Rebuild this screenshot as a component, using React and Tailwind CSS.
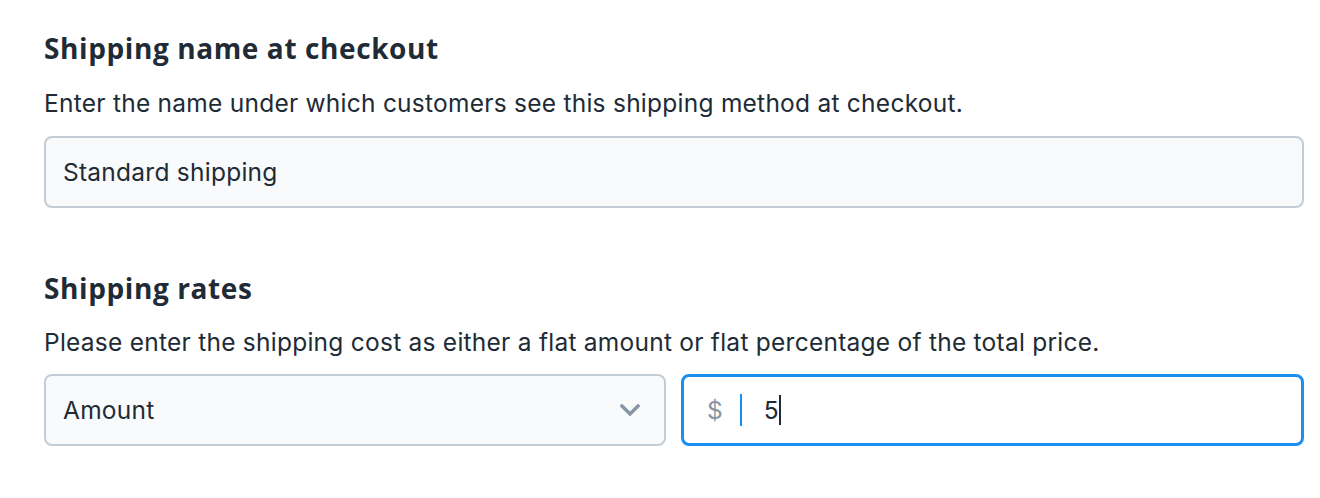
import React from 'react'

function ChevronDown() {
  return (
    <svg width="20" height="12" viewBox="0 0 20 12" fill="none">
      <path d="M2 2l8 8 8-8" stroke="#8795a4" strokeWidth="3.4" strokeLinecap="square" />
    </svg>
  )
}

export default function App() {
  return (
    <div className="w-[1320px] h-[498px] bg-white pl-[44px] pr-[16px] pt-[30px] font-['Inter',sans-serif] text-[#212b36]">
      {/* Shipping name */}
      <section>
        <h2 className="text-[28px] leading-[36px] font-bold font-['Open_Sans',sans-serif] tracking-[0.6px]">Shipping name at checkout</h2>
        <p className="mt-[21px] text-[24.5px] leading-[32px] tracking-[0.25px]">
          Enter the name under which customers see this shipping method at checkout.
        </p>
        <div className="mt-[17px] h-[72px] flex items-center px-[17px] rounded-[8px] border-2 border-[#c4cdd5] bg-[#f9fafb] text-[24.5px] tracking-[0.25px]">
          Standard shipping
        </div>
      </section>

      {/* Shipping rates */}
      <section className="mt-[62px]">
        <h2 className="text-[28px] leading-[36px] font-bold font-['Open_Sans',sans-serif] tracking-[0.6px]">Shipping rates</h2>
        <p className="mt-[20px] text-[24.5px] leading-[32px] tracking-[0.25px]">
          Please enter the shipping cost as either a flat amount or flat percentage of the total price.
        </p>
        <div className="mt-[16px] flex gap-[15px]">
          <div className="w-[622px] h-[72px] flex items-center justify-between pl-[17px] pr-[24px] rounded-[8px] border-2 border-[#c4cdd5] bg-[#f9fafb] text-[24.5px] tracking-[0.25px]">
            <span>Amount</span>
            <ChevronDown />
          </div>
          <div className="flex-1 h-[72px] flex items-center pl-[23px] rounded-[8px] border-[3px] border-[#1a8ff0] bg-white text-[24.5px]">
            <span className="text-[#8795a4]">$</span>
            <span className="ml-[17px] w-[2px] h-[32px] bg-[#1a8ff0]"></span>
            <span className="ml-[22px]">5</span>
            <span className="w-[2px] h-[30px] bg-[#212b36]"></span>
          </div>
        </div>
      </section>
    </div>
  )
}
